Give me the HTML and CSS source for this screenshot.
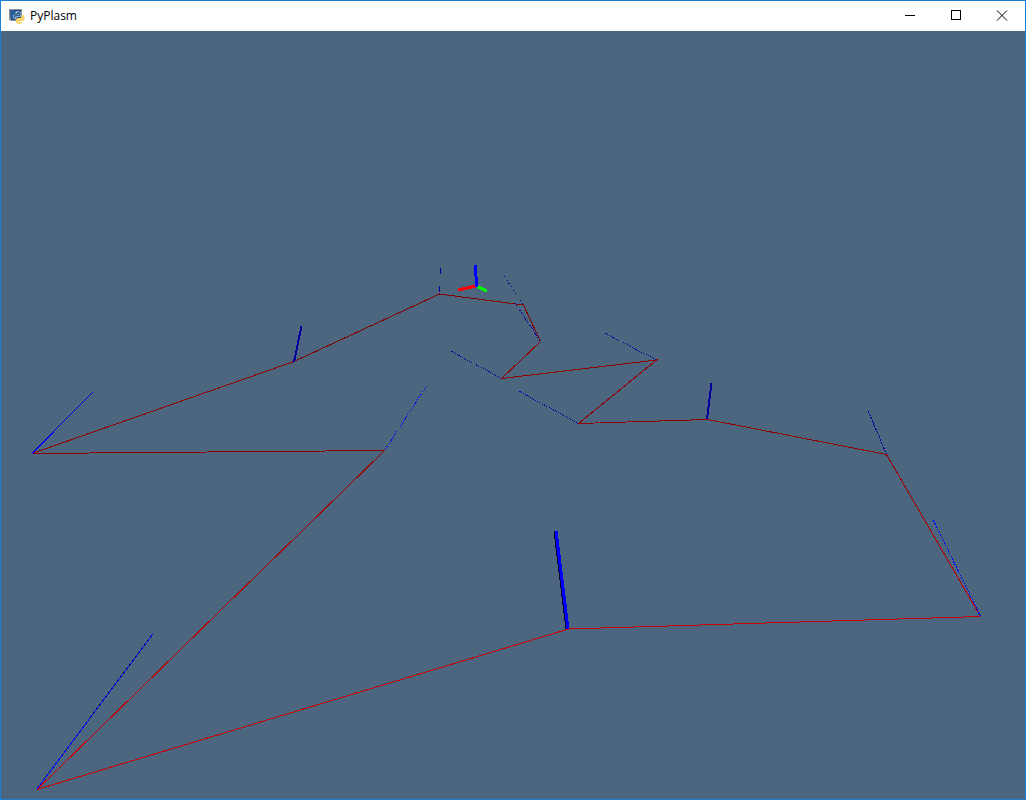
FILE: index.html
```html
<!DOCTYPE html>
<html lang="en">
<head>
<meta charset="utf-8">
<meta name="viewport" content="width=device-width, initial-scale=1">
<title>PyPlasm</title>
<link rel="stylesheet" href="styles.css">
</head>
<body>
<div class="window">
  <header class="titlebar">
    <svg class="app-icon" viewBox="0 0 16 16" aria-hidden="true">
      <path fill="#8d9297" d="M0 1h13v11l-2 1H2l-2-1z"/>
      <path fill="#174277" d="M1 2h11v9l-10 1z"/>
      <path fill="#2a5f9f" d="M1 2h5L4 11H2z"/>
      <path fill="#8fb4d8" d="M6 5q0-2 3-2t3 2v3q0 1-1 1H9Q7 9 7 11H6q-2 0-2-2.500T6 6.500h3V6H6z"/>
      <path fill="#35628f" d="M6.500 5.500q0-1.500 2.500-1.500t2.500 1.500V7q0 1-1 1H8Q6 8 6 10 5 10 5 8.500T6.500 7H10V6H6.500z"/>
      <path fill="#f8d469" d="M12.500 7h1q2 0 2 3t-2 3H11v1h2.500q0 2-3 2T7 14v-2q0-2 2-2h2q1.500 0 1.500-2z"/>
      <path fill="#fff" d="M7 4h1v1H7zM11 14h1v1h-1z"/>
    </svg>
    <h1 class="title">PyPlasm</h1>
    <div class="controls">
      <button class="control" type="button" aria-label="Minimize">
        <svg class="glyph" viewBox="0 0 10 10" aria-hidden="true"><path d="M0 4.500h10"/></svg>
      </button>
      <button class="control" type="button" aria-label="Maximize">
        <svg class="glyph" viewBox="0 0 10 10" aria-hidden="true"><path d="M.5 -.5h9v9h-9z"/></svg>
      </button>
      <button class="control" type="button" aria-label="Close">
        <svg class="glyph glyph-close" viewBox="0 0 10 10" aria-hidden="true"><path d="M0 -.5l10 10M10 -.5L0 9.500"/></svg>
      </button>
    </div>
  </header>
  <main class="viewport">
    <svg class="scene" viewBox="1 31 1024 768" role="img" aria-label="Closed 3D polyline with normals and axes">
      <defs>
        <linearGradient id="edge-left" gradientUnits="userSpaceOnUse" x1="384" y1="450" x2="37" y2="789">
          <stop offset="0" stop-color="#980000"/><stop offset="1" stop-color="#d00000"/>
        </linearGradient>
        <linearGradient id="edge-right" gradientUnits="userSpaceOnUse" x1="886" y1="454" x2="980" y2="616">
          <stop offset="0" stop-color="#980000"/><stop offset="1" stop-color="#c00000"/>
        </linearGradient>
      </defs>
      <g class="edges">
        <path class="far" d="M294 361.500L439.500 294L523.500 305L540.500 341.500"/>
        <path class="mid" d="M540.500 341.500L501.500 378.500L656.500 360L578.500 423.500L707.500 419.500L886.500 454.500M384.500 450.500L32 453.500L294 361.500"/>
        <path stroke="url(#edge-right)" d="M886.500 454.500L980.500 616.500"/>
        <path class="near" d="M980.500 616.500L568.500 629L37 789.500"/>
        <path stroke="url(#edge-left)" d="M37 789.500L384.500 450.500"/>
      </g>
      <g class="normals">
        <path class="bright" d="M32 453.500L92.500 392.500M36.500 789.500L152.500 634.500"/>
        <path class="speck" d="M36.500 789.500L152.500 634.500"/>
        <path class="dark" d="M440.500 268v6M439.500 286v6"/>
        <path class="dark sparse" d="M504.500 276.500L523.500 305.500"/>
        <path class="dark dotted" d="M515.500 303.500L540.500 341.500M451.500 351.500L501.500 378.500M605.500 333.500L656.500 360M519.500 391.500L578.500 423.500"/>
        <path class="bright dotted" d="M425.500 387.500L384.500 450.500"/>
        <path class="dark dashed" d="M868.500 411.500L886.500 454.500"/>
        <path class="bright dashed" d="M933.500 520.500L980.500 616.500"/>
        <path class="dark thick" d="M301.500 326L294 362M711.500 383L707 419"/>
        <path class="shadow" d="M555.500 531L567.500 629"/>
        <path class="bright wide" d="M556 531L568 629"/>
      </g>
      <g class="axes">
        <path class="axis-x" d="M476 286L458 290"/>
        <path class="axis-y" d="M477 286.500L487 291"/>
        <path class="axis-z" d="M475.500 265L476.500 287"/>
      </g>
    </svg>
  </main>
</div>
</body>
</html>
```
FILE: styles.css
```css
* {
  box-sizing: border-box;
}

body {
  margin: 0;
  font-family: "Open Sans", "Noto Sans", sans-serif;
}

.window {
  display: flex;
  flex-direction: column;
  height: 100vh;
  border: 1px solid #1a7fd4;
  background: #4d667f;
}

.titlebar {
  display: flex;
  align-items: center;
  height: 30px;
  flex: none;
  padding-left: 8px;
  background: #fff;
}

.app-icon {
  width: 16px;
  height: 16px;
  margin-right: 5px;
}

.title {
  margin: 0;
  font-size: 12px;
  line-height: 16px;
  font-weight: 400;
  color: #000;
}

.controls {
  display: flex;
  align-self: stretch;
  margin-left: auto;
}

.control {
  display: flex;
  align-items: center;
  justify-content: center;
  width: 46px;
  padding: 0;
  border: 0;
  background: transparent;
}

.control:hover {
  background: #e5e5e5;
}

.glyph {
  width: 10px;
  height: 10px;
  overflow: visible;
  fill: none;
  stroke: #000;
  shape-rendering: crispEdges;
}

.glyph-close {
  shape-rendering: auto;
}

.viewport {
  flex: 1;
  min-height: 0;
}

.scene {
  display: block;
  width: 100%;
  height: 100%;
  fill: none;
  shape-rendering: crispEdges;
}

.far {
  stroke: #800000;
}

.mid {
  stroke: #900000;
}

.near {
  stroke: #c80000;
}

.dark {
  stroke: #0000a0;
}

.bright {
  stroke: #00f;
}

.speck {
  stroke: #000050;
  stroke-dasharray: 1 4;
}

.sparse {
  stroke-dasharray: 1 3;
}

.dotted {
  stroke-dasharray: 1 1;
}

.dashed {
  stroke-dasharray: 2 1;
}

.thick {
  stroke-width: 2;
}

.shadow {
  stroke: #000030;
  stroke-width: 4;
}

.wide {
  stroke-width: 3;
}

.axes {
  stroke-width: 3;
}

.axis-x {
  stroke: #f00;
}

.axis-y {
  stroke: #0f0;
}

.axis-z {
  stroke: #00f;
}
```
